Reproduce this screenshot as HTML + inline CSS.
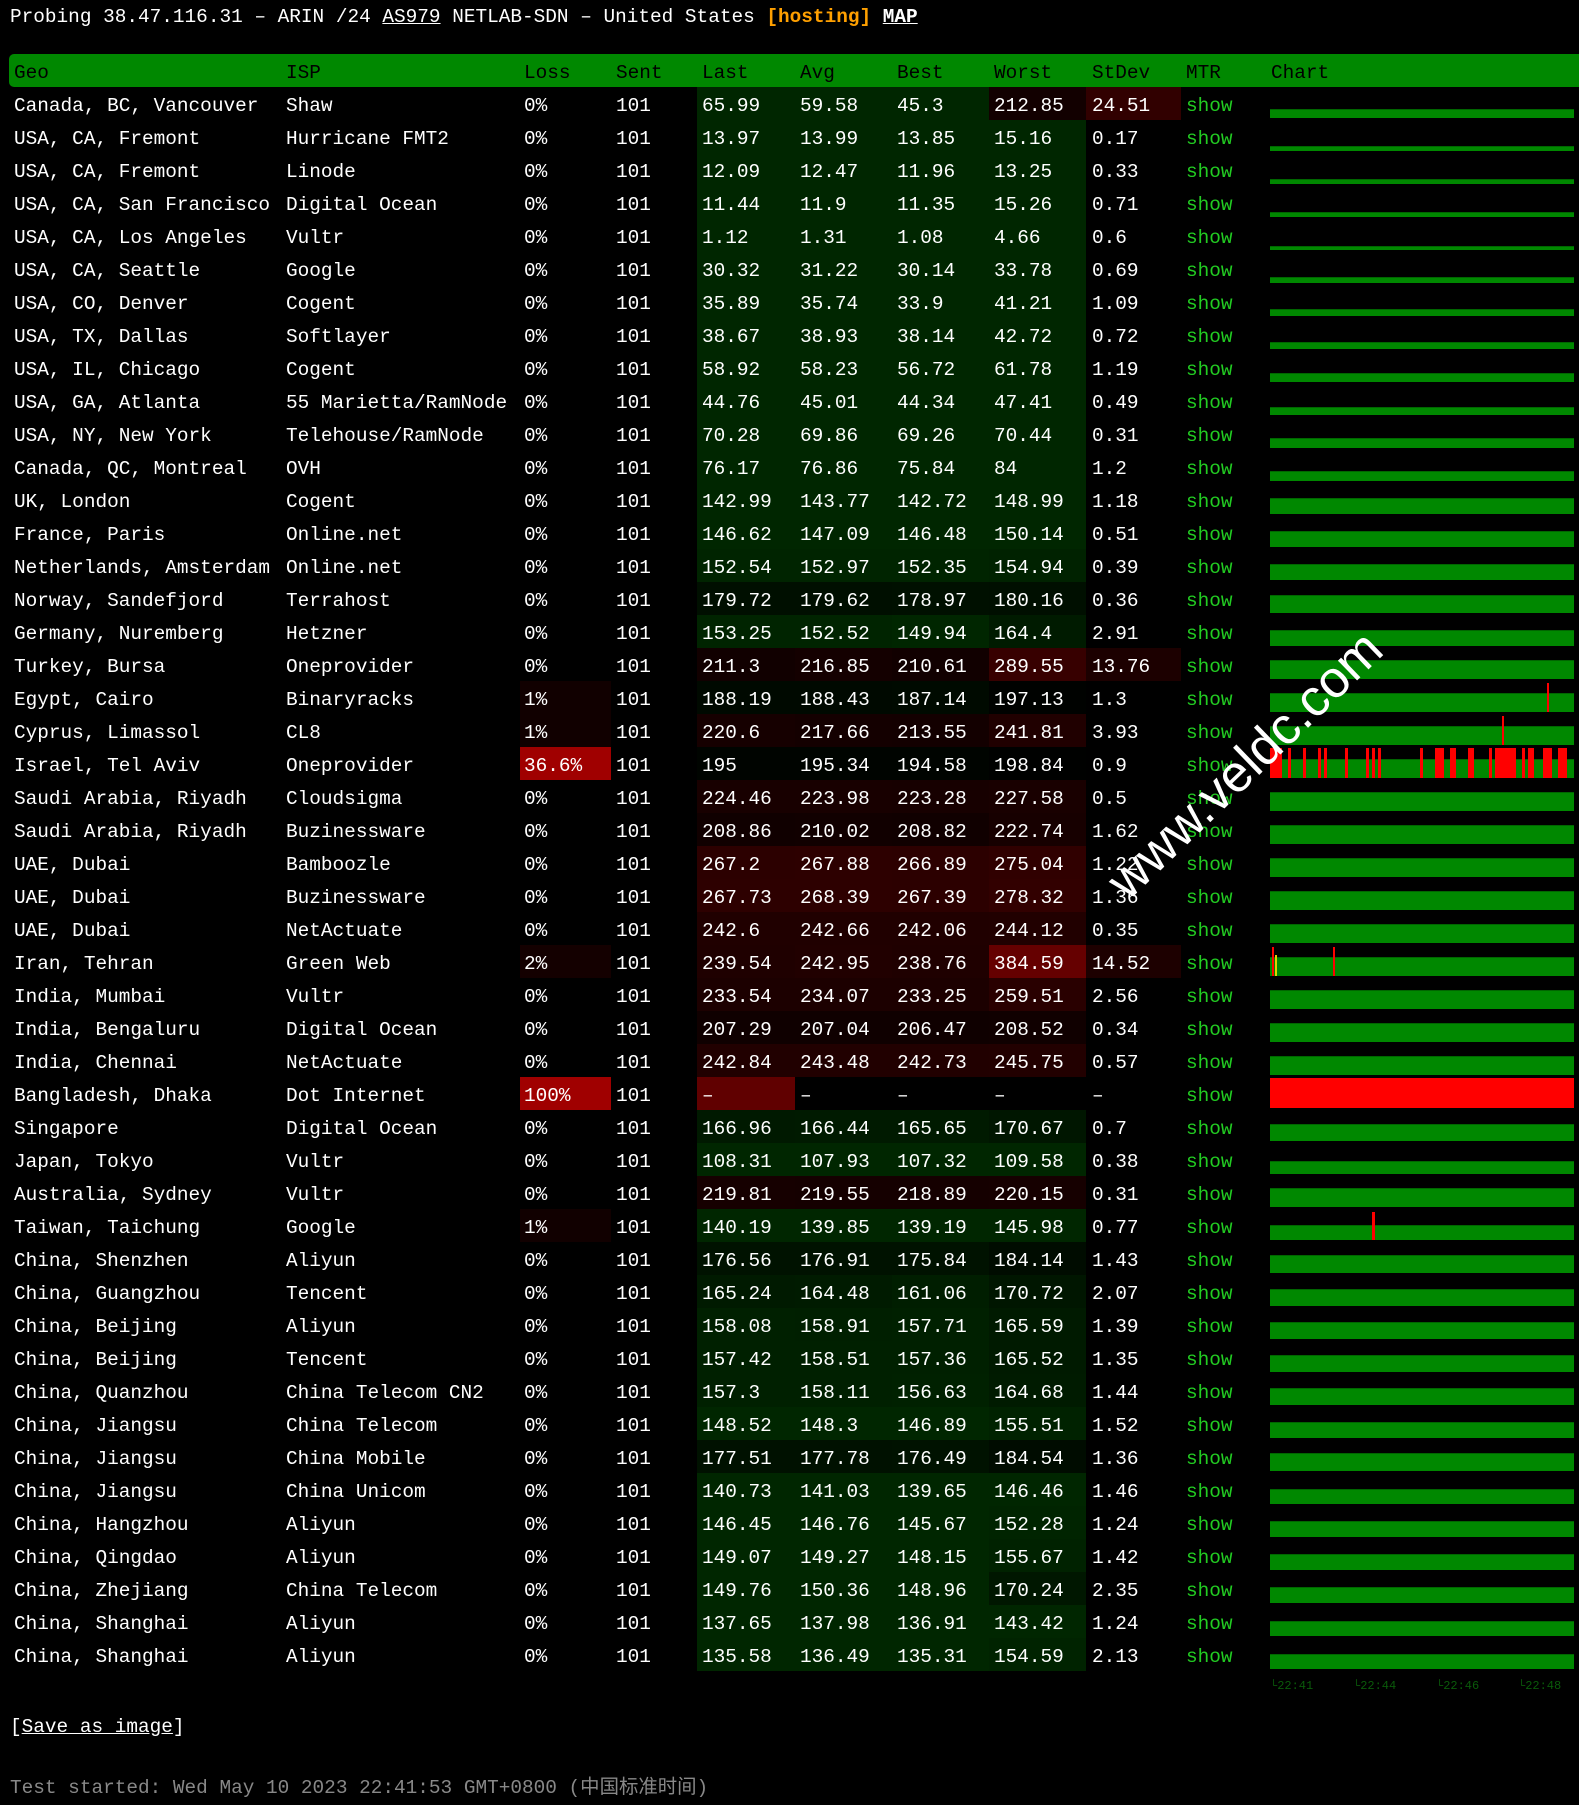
<!DOCTYPE html>
<html><head><meta charset="utf-8">
<style>
html,body{margin:0;padding:0;background:#000;}
body{width:1579px;height:1792px;position:relative;overflow:hidden;font-family:"Liberation Mono","Noto Sans CJK SC",monospace;font-size:19.4px;color:#fff;}
.t{position:absolute;white-space:pre;line-height:33px;}
.r{padding-top:3px;}
#top{position:absolute;left:10px;top:1px;line-height:32px;white-space:pre;}
#hdr{position:absolute;left:9px;top:54px;width:1570px;height:33px;background:#008800;border-radius:5px 0 0 5px;}
.bg{position:absolute;height:33px;}
.bar{position:absolute;background:#008800;border-top:1px solid #006600;}
.red{position:absolute;background:#ff0000;}
.tm{position:absolute;top:1679px;font-size:12px;color:#0a5a0a;white-space:pre;}
#wm{position:absolute;left:1245px;top:765px;transform:translate(-50%,-50%) rotate(-44deg);font-family:"Liberation Sans",sans-serif;font-size:52px;color:#fff;white-space:nowrap;}
</style></head><body>
<div id="top">Probing 38.47.116.31 – ARIN /24 <u>AS979</u> NETLAB-SDN – United States <span style="color:#ffa000;font-weight:bold">[hosting]</span> <b><u>MAP</u></b></div>
<div id="hdr"></div>
<div id="c"></div>
<div class="t" style="left:10px;top:1711px"><span>[</span><u>Save as image</u><span>]</span></div>
<div class="t" style="left:10px;top:1772px;color:#888">Test started: Wed May 10 2023 22:41:53 GMT+0800 (中国标准时间)</div>
<div class="tm" style="left:1270px">└22:41</div><div class="tm" style="left:1353px">└22:44</div><div class="tm" style="left:1436px">└22:46</div><div class="tm" style="left:1518px">└22:48</div>
<div id="wm">www.veldc.com</div>
<script>
var D=`Canada, BC, Vancouver|Shaw|0%|65.99|59.58|45.3|212.85|24.51
USA, CA, Fremont|Hurricane FMT2|0%|13.97|13.99|13.85|15.16|0.17
USA, CA, Fremont|Linode|0%|12.09|12.47|11.96|13.25|0.33
USA, CA, San Francisco|Digital Ocean|0%|11.44|11.9|11.35|15.26|0.71
USA, CA, Los Angeles|Vultr|0%|1.12|1.31|1.08|4.66|0.6
USA, CA, Seattle|Google|0%|30.32|31.22|30.14|33.78|0.69
USA, CO, Denver|Cogent|0%|35.89|35.74|33.9|41.21|1.09
USA, TX, Dallas|Softlayer|0%|38.67|38.93|38.14|42.72|0.72
USA, IL, Chicago|Cogent|0%|58.92|58.23|56.72|61.78|1.19
USA, GA, Atlanta|55 Marietta/RamNode|0%|44.76|45.01|44.34|47.41|0.49
USA, NY, New York|Telehouse/RamNode|0%|70.28|69.86|69.26|70.44|0.31
Canada, QC, Montreal|OVH|0%|76.17|76.86|75.84|84|1.2
UK, London|Cogent|0%|142.99|143.77|142.72|148.99|1.18
France, Paris|Online.net|0%|146.62|147.09|146.48|150.14|0.51
Netherlands, Amsterdam|Online.net|0%|152.54|152.97|152.35|154.94|0.39
Norway, Sandefjord|Terrahost|0%|179.72|179.62|178.97|180.16|0.36
Germany, Nuremberg|Hetzner|0%|153.25|152.52|149.94|164.4|2.91
Turkey, Bursa|Oneprovider|0%|211.3|216.85|210.61|289.55|13.76
Egypt, Cairo|Binaryracks|1%|188.19|188.43|187.14|197.13|1.3
Cyprus, Limassol|CL8|1%|220.6|217.66|213.55|241.81|3.93
Israel, Tel Aviv|Oneprovider|36.6%|195|195.34|194.58|198.84|0.9
Saudi Arabia, Riyadh|Cloudsigma|0%|224.46|223.98|223.28|227.58|0.5
Saudi Arabia, Riyadh|Buzinessware|0%|208.86|210.02|208.82|222.74|1.62
UAE, Dubai|Bamboozle|0%|267.2|267.88|266.89|275.04|1.22
UAE, Dubai|Buzinessware|0%|267.73|268.39|267.39|278.32|1.36
UAE, Dubai|NetActuate|0%|242.6|242.66|242.06|244.12|0.35
Iran, Tehran|Green Web|2%|239.54|242.95|238.76|384.59|14.52
India, Mumbai|Vultr|0%|233.54|234.07|233.25|259.51|2.56
India, Bengaluru|Digital Ocean|0%|207.29|207.04|206.47|208.52|0.34
India, Chennai|NetActuate|0%|242.84|243.48|242.73|245.75|0.57
Bangladesh, Dhaka|Dot Internet|100%|–|–|–|–|–
Singapore|Digital Ocean|0%|166.96|166.44|165.65|170.67|0.7
Japan, Tokyo|Vultr|0%|108.31|107.93|107.32|109.58|0.38
Australia, Sydney|Vultr|0%|219.81|219.55|218.89|220.15|0.31
Taiwan, Taichung|Google|1%|140.19|139.85|139.19|145.98|0.77
China, Shenzhen|Aliyun|0%|176.56|176.91|175.84|184.14|1.43
China, Guangzhou|Tencent|0%|165.24|164.48|161.06|170.72|2.07
China, Beijing|Aliyun|0%|158.08|158.91|157.71|165.59|1.39
China, Beijing|Tencent|0%|157.42|158.51|157.36|165.52|1.35
China, Quanzhou|China Telecom CN2|0%|157.3|158.11|156.63|164.68|1.44
China, Jiangsu|China Telecom|0%|148.52|148.3|146.89|155.51|1.52
China, Jiangsu|China Mobile|0%|177.51|177.78|176.49|184.54|1.36
China, Jiangsu|China Unicom|0%|140.73|141.03|139.65|146.46|1.46
China, Hangzhou|Aliyun|0%|146.45|146.76|145.67|152.28|1.24
China, Qingdao|Aliyun|0%|149.07|149.27|148.15|155.67|1.42
China, Zhejiang|China Telecom|0%|149.76|150.36|148.96|170.24|2.35
China, Shanghai|Aliyun|0%|137.65|137.98|136.91|143.42|1.24
China, Shanghai|Aliyun|0%|135.58|136.49|135.31|154.59|2.13`.split('\n');
var h='';
function T(x,y,s,c){h+='<div class="t r" style="left:'+x+'px;top:'+y+'px'+(c?';color:'+c:'')+'">'+s+'</div>';}
function B(x,y,w,c){if(c)h+='<div class="bg" style="left:'+x+'px;top:'+y+'px;width:'+w+'px;background:'+c+'"></div>';}
function lc(v){v=parseFloat(v);if(isNaN(v))return '#600000';
 if(v<=150)return 'rgb(0,38,0)';
 if(v<200){var g=Math.round(38*(200-v)/50);return 'rgb(0,'+g+',0)';}
 var r=Math.min(102,Math.round(12+(v-200)*0.48));return 'rgb('+r+',0,0)';}
function sc(v){v=parseFloat(v);if(isNaN(v)||v<5)return null;return 'rgb('+Math.min(90,Math.round(v*2))+',0,0)';}
function ls(v){v=parseFloat(v);if(v==0)return null;if(v>=30)return '#a00000';return 'rgb('+Math.round(14+v*3)+',0,0)';}
var hx=[14,286,524,616,702,800,897,994,1092,1186,1271],hn=['Geo','ISP','Loss','Sent','Last','Avg','Best','Worst','StDev','MTR','Chart'];
for(var i=0;i<hn.length;i++)h+='<div class="t r" style="left:'+hx[i]+'px;top:54px;color:#000">'+hn[i]+'</div>';
var cx=[697,795,892,989,1086,1181];
D.forEach(function(l,i){var f=l.split('|');var y=87+i*33;
 B(520,y,91,ls(f[2]));
 if(f[3]=='–'){B(697,y,98,'#600000');}
 else{for(var k=0;k<4;k++)B(cx[k],y,cx[k+1]-cx[k],lc(f[3+k]));}
 B(1086,y,95,sc(f[7]));
 T(14,y,f[0]);T(286,y,f[1]);T(524,y,f[2]);T(616,y,'101');
 for(var k=0;k<5;k++)T(hx[4+k],y,f[3+k]);
 T(1186,y,'show','#22cc22');
 if(f[3]=='–'){h+='<div class="red" style="left:1270px;top:'+(y+1)+'px;width:304px;height:30px"></div>';}
 else{var v=parseFloat(f[4]);var bh=Math.min(19,Math.round(4+v*0.08));
  h+='<div class="bar" style="left:1270px;top:'+(y+31-bh)+'px;width:304px;height:'+(bh-1)+'px"></div>';}
});
function R(x,y,w,hh,c){h+='<div style="position:absolute;left:'+x+'px;top:'+y+'px;width:'+w+'px;height:'+hh+'px;background:'+(c||'#f00')+'"></div>';}
var iy=87+20*33+1;
[[1270,12],[1288,3],[1303,3],[1318,3],[1324,3],[1345,3],[1366,3],[1372,3],[1378,3],[1420,3],[1435,9],[1450,6],[1468,6],[1489,3],[1495,21],[1522,3],[1528,6],[1543,9],[1558,9]].forEach(function(a){R(a[0],iy,a[1],30);});
R(1547,87+18*33+2,2,29);R(1502,87+19*33+2,2,29);
var ry=87+26*33;R(1272,ry+2,2,29);R(1275,ry+10,2,21,'#e0d000');R(1333,ry+2,2,29);
R(1372,87+34*33+3,3,28);
document.getElementById('c').innerHTML=h;
</script>
</body></html>
